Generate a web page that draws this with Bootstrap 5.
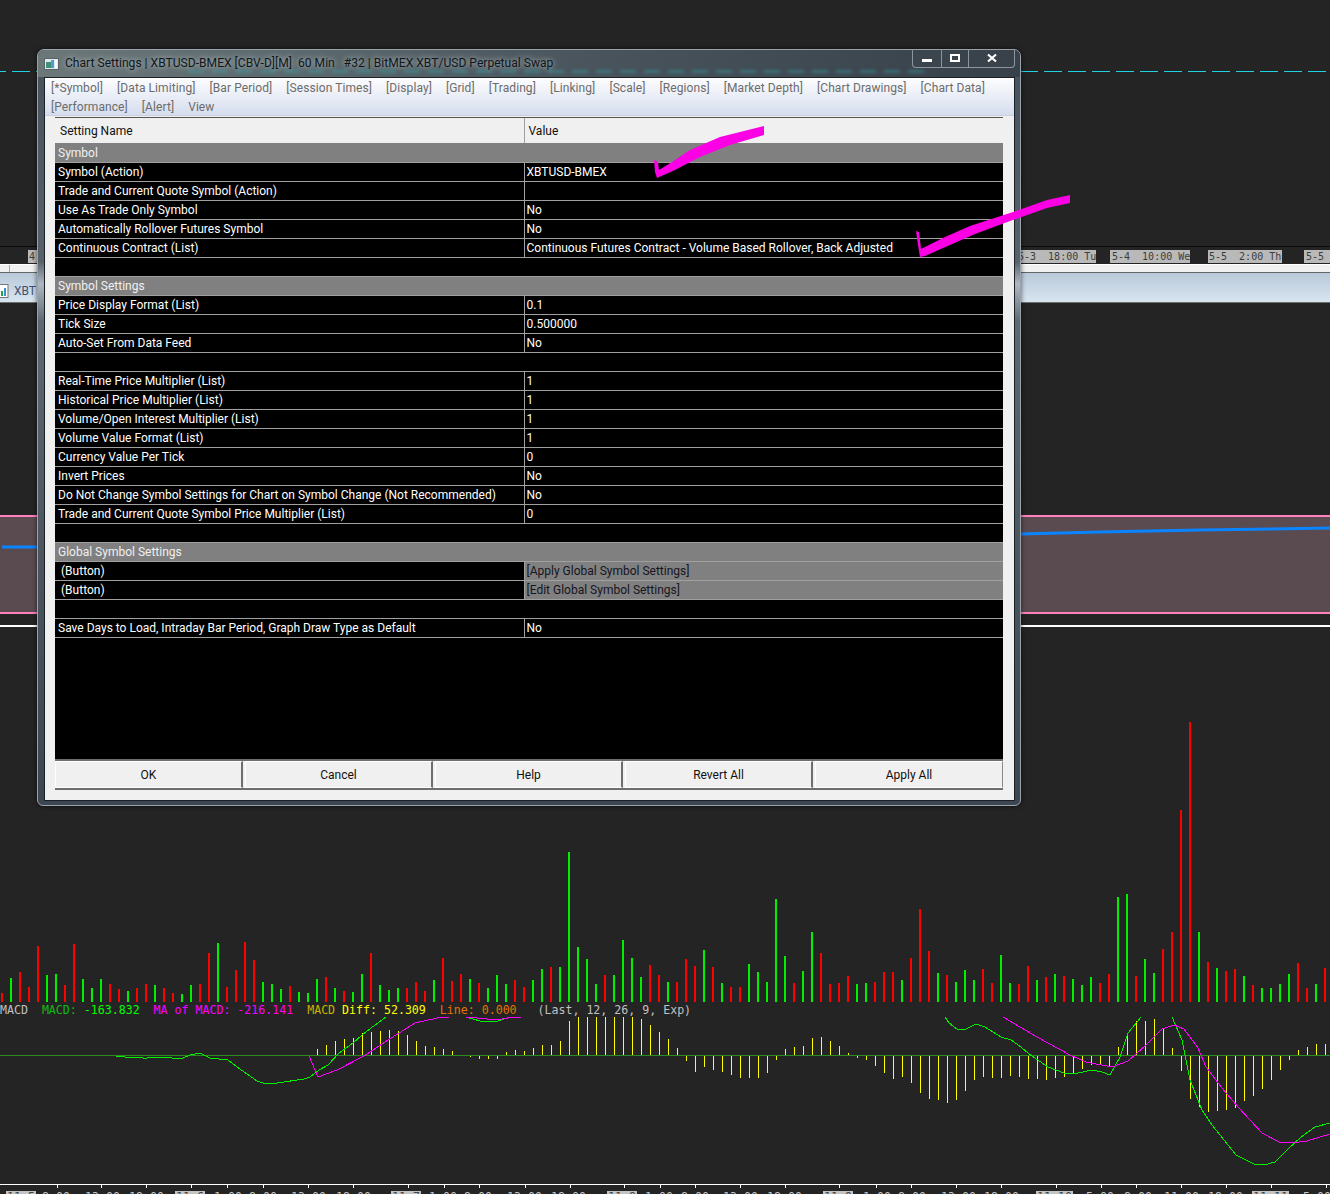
<!DOCTYPE html>
<html lang="en">
<head>
    <meta charset="UTF-8">
    <meta name="viewport" content="width=device-width, initial-scale=1.0">
    <title>Chart Settings</title>
    <link href="https://cdn.jsdelivr.net/npm/bootstrap@5.3.0/dist/css/bootstrap.min.css" rel="stylesheet">
    <style>
        body { background: #242424; font-family: Roboto, "Liberation Sans", sans-serif; font-size: 12px; }
        .desk { position: relative; width: 1330px; height: 1194px; overflow: hidden; background: #242424; }
        .mono { font-family: "DejaVu Sans Mono", "Liberation Mono", monospace; white-space: pre; }

        /* chart behind the dialog */
        .top-space { height: 71px; }
        .dash-line { height: 1px; background: repeating-linear-gradient(90deg, #1fd3e3 0 6px, transparent 6px 12px, #1fd3e3 12px 24px); }
        .upper-space { height: 174px; }
        .date-strip { height: 18px; border-top: 1px solid #0c0c0c; font-size: 10px; line-height: 13px; padding-top: 3px; }
        .date-tag { background: #b9b9b9; color: #3c3c3c; height: 13px; overflow: hidden; flex: none; }
        .date-tag.t0 { margin-left: 28px; width: 40px; padding-left: 1px; }
        .date-tag.t1 { margin-left: 950px; width: 78px; text-align: right; }
        .date-tag.t2 { margin-left: 14px; width: 80px; padding-left: 2px; }
        .date-tag.t3 { margin-left: 18px; width: 74px; padding-left: 1px; }
        .date-tag.t4 { margin-left: 22px; width: 40px; padding-left: 2px; }
        .tab-strip { height: 8px; background: linear-gradient(90deg, transparent 9px, #a8a8a8 9px, #a8a8a8 10px, transparent 10px), #f0f0f0; border-top: 1px solid #fff; }
        .pane-head { height: 31px; padding-top: 6px; border-top: 1px solid #666; border-bottom: 1px solid #6e6e6e; background: linear-gradient(#b9c9d9, #d8e5f1); color: #3d5170; font-size: 12px; }
        .pane-icon { width: 9px; height: 14px; margin-right: 5px; }
        .mid-space { height: 212px; }
        .pink-band { height: 99px; background: #5a4b50; border-top: 2px solid #ff80bd; border-bottom: 2px solid #ff80bd; }
        .pink-band svg { display: block; width: 1330px; height: 95px; }
        .white-rule { height: 2px; margin-top: 11px; background: #fff; }
        .chart-svg { display: block; width: 1330px; }
        .vol-svg { height: 375px; }
        .legend-line { height: 15px; font-size: 11.6px; line-height: 16px; color: #c0c0c0; }
        .c-g1 { color: #12b912; } .c-g2 { color: #0f0; } .c-m { color: #f0f; }
        .c-y1 { color: #c8b400; } .c-y2 { color: #ff0; } .c-o { color: #e67300; }
        .macd-svg { height: 167px; }
        .axis-svg { height: 10px; }
        .axis-svg text { font-family: "DejaVu Sans Mono", monospace; font-size: 11.6px; }

        /* dialog window */
        .settings-win { position: absolute; left: 37px; top: 49px; width: 984px; height: 757px; border: 1px solid #9aa3aa; border-radius: 7px 7px 6px 6px; background: linear-gradient(#46515b 0, #56616c 28%, #aeb8c2 31%, #5d6873 36%, #4a545e 70%, #3c4650 100%); box-shadow: 0 0 5px rgba(0, 0, 0, .6); }
        .title-row { position: relative; height: 27px; padding: 0 5px 0 6px; color: #10161c; font-size: 12.1px; border-radius: 6px 6px 0 0; background: linear-gradient(90deg, #6b7779 0, #59666b 30%, #47525a 60%, #38414a 100%); }
        .title-row::before { content: ""; position: absolute; left: 150px; right: 90px; top: 20px; height: 3px; filter: blur(1.5px); background: repeating-linear-gradient(90deg, rgba(50, 170, 180, .4) 0 16px, transparent 16px 24px); }
        .title-icon { width: 15px; height: 12px; margin-right: 6px; }
        .title-text { margin-top: 0; text-shadow: 0 0 5px rgba(205, 215, 215, .75), 0 0 9px rgba(205, 215, 215, .45); white-space: pre; }
        .caption-group { margin-top: -1px; height: 19px; border: 1px solid #8d969d; border-top: 0; border-radius: 0 0 4px 4px; }
        .caption-btn { height: 18px; border-right: 1px solid #8d969d; }
        .caption-btn:last-child { border-right: 0; }
        .cb-min { width: 29px; } .cb-max { width: 27px; } .cb-close { width: 45px; }
        .win-client { height: 724px; margin: 0 5px 0 6px; border: 1px solid #1a2026; background: #f0f0f0; }
        .tab-band { height: 38px; padding: 1px 6px 0; background: linear-gradient(#fdfdfe, #d5ddee); column-gap: 14px; border-bottom: 1px solid #c9d0dc; }
        .tab-link { color: #6c6c6c; font-size: 12px; letter-spacing: .08px; line-height: 19px; text-decoration: none; white-space: nowrap; }
        .grid-area { margin: 1px 11px 0 10px; height: 642px; background: #000; border-top: 1px solid #555; overflow: hidden; }
        .cfg-grid { --bs-table-bg: #000; --bs-table-color: #fff; table-layout: fixed; width: 948px; border-collapse: collapse; }
        .cfg-grid th, .cfg-grid td { height: 19px; padding: 0 0 0 3px; line-height: 18px; font-weight: 400; border: 0; border-bottom: 1px solid #a0a0a0; white-space: nowrap; overflow: hidden; }
        .cfg-grid td + td { border-left: 1px solid #a0a0a0; padding-left: 2px; }
        .cfg-grid thead th { height: 25px; padding-top: 1px; vertical-align: middle; background: #f0f0f0; color: #111; padding-left: 5px; border-bottom: 1px solid #808080; box-shadow: none; }
        .cfg-grid thead th + th { border-left: 1px solid #a0a0a0; padding-left: 4px; }
        .cfg-grid tr.grp td { background: #808080; color: #f0f0f0; }
        .cfg-grid td.act-name { padding-left: 6px; }
        .cfg-grid td.act-val { background: #808080; color: #15151f; }
        .foot-row { margin: 0 11px 0 10px; height: 31px; gap: 2px; border-top: 2px solid #6e6e6e; border-bottom: 2px solid #6e6e6e; }
        .foot-btn { width: 188px; height: 27px; padding: 0; font-size: 12px; line-height: 24px; color: #111; background: #f0f0f0; border-radius: 0; border: 1px solid #fff; border-right: 2px solid #6e6e6e; }
        .foot-btn:last-child { border-right: 1px solid #8a8a8a; }

        .ink-layer { position: absolute; left: 0; top: 0; width: 1330px; height: 1194px; pointer-events: none; }
    </style>
</head>
<body>
    <div class="desk">
        <!-- Chart panes in the background -->
        <div class="top-space"></div>
        <div class="dash-line"></div>
        <div class="upper-space"></div>
        <div class="date-strip mono d-flex">
            <div class="date-tag t0">4</div>
            <div class="date-tag t1">5-3  18:00 Tu</div>
            <div class="date-tag t2">5-4  10:00 We</div>
            <div class="date-tag t3">5-5  2:00 Th</div>
            <div class="date-tag t4">5-5  18:00</div>
        </div>
        <div class="tab-strip"></div>
        <div class="pane-head d-flex align-items-center">
            <svg class="pane-icon" viewBox="0 0 9 14"><rect x="-5" y=".5" width="13" height="13" fill="#fff" stroke="#777"/><rect x="1" y="7" width="2" height="5" fill="#2aa040"/><rect x="4" y="4" width="2" height="8" fill="#3b8fd0"/></svg>
            <span>XBT</span>
        </div>
        <div class="mid-space"></div>
        <div class="pink-band">
            <svg viewBox="0 517 1330 95"><path d="M2 547H37" stroke="#0a84ff" stroke-width="3" fill="none"/><path d="M1020 534L1100 532L1200 530L1330 528" stroke="#0a84ff" stroke-width="3" fill="none"/></svg>
        </div>
        <div class="white-rule"></div>
        <svg id="volChart" class="chart-svg vol-svg" viewBox="0 627 1330 375" shape-rendering="crispEdges"></svg>
        <div class="legend-line mono">MACD  <span class="c-g1">MACD:</span><span class="c-g2"> -163.832</span>  <span class="c-m">MA of MACD: -216.141</span>  <span class="c-y1">MACD</span><span class="c-y2"> Diff: 52.309</span>  <span class="c-o">Line: 0.000</span>   (Last, 12, 26, 9, Exp)</div>
        <svg id="macdChart" class="chart-svg macd-svg" viewBox="0 1017 1330 167" shape-rendering="crispEdges"></svg>
        <svg id="axisChart" class="chart-svg axis-svg" viewBox="0 1184 1330 10"></svg>

        <!-- Chart Settings dialog -->
        <div class="settings-win">
            <div class="title-row d-flex align-items-center">
                <svg class="title-icon" viewBox="0 0 15 12"><rect x=".5" y=".5" width="14" height="11" fill="#dfe8ea" stroke="#5b6468"/><rect x="2" y="4" width="5" height="6" fill="#3f8f7a"/><rect x="7" y="2" width="3" height="8" fill="#4f9fd0"/><rect x="11" y="2" width="2" height="8" fill="#fff"/></svg>
                <span class="title-text">Chart Settings | XBTUSD-BMEX [CBV-D][M]  60 Min   #32 | BitMEX XBT/USD Perpetual Swap</span>
                <div class="caption-group d-flex ms-auto align-self-start">
                    <div class="caption-btn cb-min d-flex align-items-center justify-content-center"><svg width="10" height="10" viewBox="0 0 10 10"><rect y="6" width="10" height="3" fill="#fff"/></svg></div>
                    <div class="caption-btn cb-max d-flex align-items-center justify-content-center"><svg width="10" height="10" viewBox="0 0 10 10"><rect x="1" y="2" width="8" height="6" fill="none" stroke="#fff" stroke-width="2"/></svg></div>
                    <div class="caption-btn cb-close d-flex align-items-center justify-content-center"><svg width="10" height="10" viewBox="0 0 10 10"><path d="M1 1.5L9 8.5M9 1.5L1 8.5" stroke="#fff" stroke-width="2.2" fill="none"/></svg></div>
                </div>
            </div>
            <div class="win-client">
                <div class="tab-band d-flex flex-wrap align-content-start">
                    <a class="tab-link" href="#">[*Symbol]</a>
                    <a class="tab-link" href="#">[Data Limiting]</a>
                    <a class="tab-link" href="#">[Bar Period]</a>
                    <a class="tab-link" href="#">[Session Times]</a>
                    <a class="tab-link" href="#">[Display]</a>
                    <a class="tab-link" href="#">[Grid]</a>
                    <a class="tab-link" href="#">[Trading]</a>
                    <a class="tab-link" href="#">[Linking]</a>
                    <a class="tab-link" href="#">[Scale]</a>
                    <a class="tab-link" href="#">[Regions]</a>
                    <a class="tab-link" href="#">[Market Depth]</a>
                    <a class="tab-link" href="#">[Chart Drawings]</a>
                    <a class="tab-link" href="#">[Chart Data]</a>
                    <div class="w-100"></div>
                    <a class="tab-link" href="#">[Performance]</a>
                    <a class="tab-link" href="#">[Alert]</a>
                    <a class="tab-link" href="#">View</a>
                </div>
                <div class="grid-area">
                    <table class="table mb-0 cfg-grid">
                        <colgroup><col width="469"><col width="479"></colgroup>
                        <thead><tr><th>Setting Name</th><th>Value</th></tr></thead>
                        <tbody>
                            <tr class="grp"><td colspan="2">Symbol</td></tr>
                            <tr><td>Symbol (Action)</td><td>XBTUSD-BMEX</td></tr>
                            <tr><td>Trade and Current Quote Symbol (Action)</td><td></td></tr>
                            <tr><td>Use As Trade Only Symbol</td><td>No</td></tr>
                            <tr><td>Automatically Rollover Futures Symbol</td><td>No</td></tr>
                            <tr><td>Continuous Contract (List)</td><td>Continuous Futures Contract - Volume Based Rollover, Back Adjusted</td></tr>
                            <tr><td colspan="2"></td></tr>
                            <tr class="grp"><td colspan="2">Symbol Settings</td></tr>
                            <tr><td>Price Display Format (List)</td><td>0.1</td></tr>
                            <tr><td>Tick Size</td><td>0.500000</td></tr>
                            <tr><td>Auto-Set From Data Feed</td><td>No</td></tr>
                            <tr><td colspan="2"></td></tr>
                            <tr><td>Real-Time Price Multiplier (List)</td><td>1</td></tr>
                            <tr><td>Historical Price Multiplier (List)</td><td>1</td></tr>
                            <tr><td>Volume/Open Interest Multiplier (List)</td><td>1</td></tr>
                            <tr><td>Volume Value Format (List)</td><td>1</td></tr>
                            <tr><td>Currency Value Per Tick</td><td>0</td></tr>
                            <tr><td>Invert Prices</td><td>No</td></tr>
                            <tr><td>Do Not Change Symbol Settings for Chart on Symbol Change (Not Recommended)</td><td>No</td></tr>
                            <tr><td>Trade and Current Quote Symbol Price Multiplier (List)</td><td>0</td></tr>
                            <tr><td colspan="2"></td></tr>
                            <tr class="grp"><td colspan="2">Global Symbol Settings</td></tr>
                            <tr><td class="act-name">(Button)</td><td class="act-val">[Apply Global Symbol Settings]</td></tr>
                            <tr><td class="act-name">(Button)</td><td class="act-val">[Edit Global Symbol Settings]</td></tr>
                            <tr><td colspan="2"></td></tr>
                            <tr><td>Save Days to Load, Intraday Bar Period, Graph Draw Type as Default</td><td>No</td></tr>
                        </tbody>
                    </table>
                </div>
                <div class="foot-row d-flex">
                    <button type="button" class="btn foot-btn">OK</button>
                    <button type="button" class="btn foot-btn">Cancel</button>
                    <button type="button" class="btn foot-btn">Help</button>
                    <button type="button" class="btn foot-btn">Revert All</button>
                    <button type="button" class="btn foot-btn">Apply All</button>
                </div>
            </div>
        </div>

        <!-- Hand drawn check marks on top of the screenshot -->
        <svg class="ink-layer" viewBox="0 0 1330 1194">
            <path fill="#fb00e4" d="M654 160L658 162L659 170L672 162L690 150L720 137L764 126V135L730 145L700 157L675 170L657 178L655 172Z"/>
            <path fill="#fb00e4" d="M916 231L919 232L921 249L945 237L970 226L1010 213L1047 200L1070 195V203L1047 208L1010 221L975 234L950 245L925 256L920 257L918 245Z"/>
        </svg>
    </div>

    <script>
        // Volume bars, one every 9px: positive is green, negative is red
        const volumes = [-9,24,-30,-15,-56,27,28,-17,-58,23,14,23,-18,-13,11,-14,-18,17,-14,-9,8,17,-18,-49,59,-15,-32,-60,-42,20,18,13,-16,10,9,23,-25,14,-11,10,28,-49,17,12,14,-14,-20,-11,22,-44,-21,-28,23,-19,14,27,18,-22,-15,22,33,-35,35,150,55,43,18,-27,27,62,44,25,-37,-27,
            20,-20,-43,-36,52,-35,19,-15,-15,38,30,20,103,46,-19,31,70,-49,-18,-19,-26,18,19,-20,-30,-30,22,-44,-93,-51,29,-27,20,32,22,-33,-19,47,19,-18,-36,22,-25,28,-26,23,17,25,-19,-28,105,108,-26,43,29,-53,-70,-192,-280,70,-40,34,-31,-33,26,-17,14,14,18,28,-39,-14,18,-34];

        // MACD histogram from bar 35 onwards, in pixels above or below the zero line
        const macdDiff = [6,10,14,16,17,22,23,24,25,24,20,14,9,8,6,4,0,-1,-3,-3,-3,3,5,4,7,10,10,14,34,38,38,38,38,38,38,38,36,30,23,16,7,-5,-16,
            -11,-14,-16,-19,-22,-22,-22,-17,-4,6,8,9,17,18,14,9,2,-2,-4,-10,-17,-23,-21,-27,-37,-43,-44,-47,-44,-35,-24,-21,-22,-22,-20,-21,-23,-23,-24,-22,-21,-17,-13,-9,-8,-10,8,22,34,34,36,26,7,-15,-43,-51,-56,-55,-54,-52,-45,-40,-33,-24,-14,-4,5,8,11,11];

        const macdLines = [
            ['#00f000', '116,1056 125,1057 143,1058 147,1058 161,1057 172,1058 183,1058 190,1055 200,1053 210,1058 228,1060 237,1067 257,1081 263,1083 277,1083 304,1079 310,1077 319,1070 328,1065 339,1053 353,1043 362,1035 371,1028 386,1017'],
            ['#00f000', '466,1017 480,1021 498,1021 507,1018 509,1017'],
            ['#00f000', '945,1017 949,1023 957,1029 966,1029 976,1024 985,1027 993,1032 1001,1037 1011,1040 1021,1047 1029,1054 1048,1067 1064,1073 1078,1073 1092,1070 1102,1072 1110,1075 1120,1057 1128,1033 1141,1017'],
            ['#00f000', '1172,1017 1182,1040 1190,1080 1202,1110 1212,1125 1236,1155 1254,1164 1264,1165 1275,1162 1287,1150 1301,1137 1315,1127 1330,1123'],
            ['#ff00ff', '309,1056 318,1077 337,1070 364,1056 388,1040 415,1023 437,1018 449,1017'],
            ['#ff00ff', '466,1017 487,1019 502,1019 513,1017 521,1017'],
            ['#ff00ff', '1003,1017 1037,1037 1070,1055 1086,1062 1112,1067 1128,1061 1146,1045 1162,1029 1174,1025 1184,1029 1198,1048 1206,1067 1222,1088 1238,1107 1262,1133 1279,1142 1291,1143 1307,1141 1330,1134']
        ];

        const axisTicks = [57,101,146,191,227,263,308,353,408,444,479,525,570,624,660,695,740,785,839,876,911,956,1001,1056,1101,1136,1181,1226,1271,1326];
        const axisLabels = [[7,'11-5',1],[42,'8:00'],[85,'13:00'],[129,'18:00'],[176,'11-6',1],[214,'1:00'],[249,'8:00'],[291,'13:00'],[336,'18:00'],[392,'11-7',1],[429,'1:00'],[464,'8:00'],[507,'13:00'],[551,'18:00'],[608,'11-8',1],[645,'1:00'],[681,'8:00'],[723,'13:00'],[767,'18:00'],[824,'11-9',1],[863,'1:00'],[898,'8:00'],[941,'13:00'],[984,'18:00'],[1037,'11-10',1],[1086,'5:00'],[1124,'8:00'],[1164,'11:00'],[1208,'18:00'],[1253,'11-11',1],[1303,'5:00']];

        document.getElementById('volChart').innerHTML = volumes.map(function(v, i) {
            return `<rect x="${1 + 9 * i}" y="${1002 - Math.abs(v)}" width="2" height="${Math.abs(v)}" fill="${v > 0 ? '#00f000' : '#ff0000'}"/>`;
        }).join('');

        let macdSvg = '<rect x="0" y="1055" width="1330" height="1" fill="#2a8c1e"/>';
        macdDiff.forEach(function(v, i) {
            const y = v > 0 ? 1055 - v : 1056;
            macdSvg += `<rect x="${2 + 9 * (i + 35)}" y="${y}" width="1" height="${Math.abs(v)}" fill="#ffff00"/>`;
        });
        macdLines.forEach(function(line) {
            macdSvg += `<polyline points="${line[1]}" fill="none" stroke="${line[0]}" stroke-width="1"/>`;
        });
        document.getElementById('macdChart').innerHTML = macdSvg;

        let axisSvg = '<rect x="0" y="1184" width="1330" height="1" fill="#fff"/>';
        axisTicks.forEach(function(x) {
            axisSvg += `<rect x="${x}" y="1184" width="1" height="4" fill="#fff"/>`;
        });
        axisLabels.forEach(function(a) {
            if (a[2]) axisSvg += `<rect x="${a[0] - 1}" y="1191" width="${a[1].length * 7 + 2}" height="10" fill="#c4c4c4"/>`;
            axisSvg += `<text x="${a[0]}" y="1201" fill="${a[2] ? '#444' : '#c8c8c8'}">${a[1]}</text>`;
        });
        document.getElementById('axisChart').innerHTML = axisSvg;
    </script>
    <script src="https://cdn.jsdelivr.net/npm/bootstrap@5.3.0/dist/js/bootstrap.bundle.min.js"></script>
</body>
</html>
